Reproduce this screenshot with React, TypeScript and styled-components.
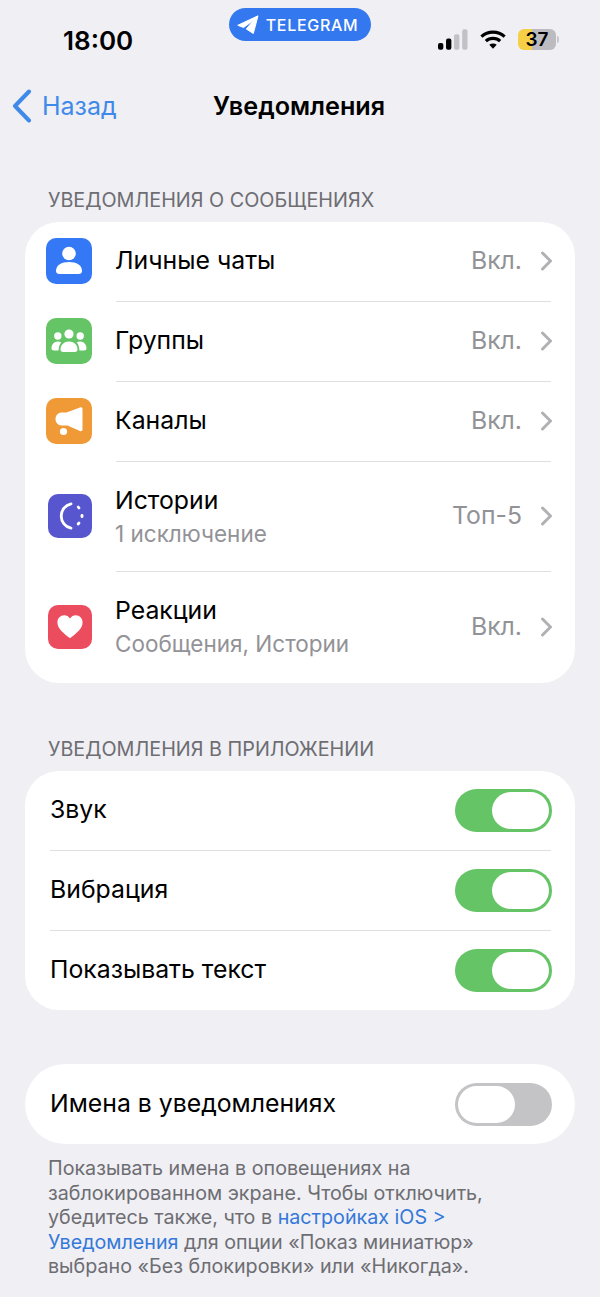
import React from "react";
import styled, { createGlobalStyle } from "styled-components";

const GlobalStyle = createGlobalStyle`
  html, body {
    margin: 0;
    padding: 0;
    background: #efeff4;
  }
  * {
    box-sizing: border-box;
  }
`;

const Page = styled.div`
  width: 600px;
  height: 1297px;
  overflow: hidden;
  background: #efeff4;
  font-family: Inter, "Liberation Sans", sans-serif;
  color: #000;
`;

const StatusBar = styled.div`
  height: 82px;
  display: grid;
  grid-template-columns: 1fr 142px 1fr;
`;

const Time = styled.div`
  padding: 25px 0 0 63px;
  font-size: 26px;
  line-height: 32px;
  font-weight: 600;
`;

const Pill = styled.div`
  margin-top: 8px;
  height: 33px;
  padding-right: 5px;
  border-radius: 17px;
  background: #3478f0;
  color: #fff;
  display: flex;
  align-items: center;
  justify-content: center;
  gap: 7px;
  font-size: 16px;
  font-weight: 500;
  letter-spacing: 0.7px;
`;

const StatusIcons = styled.div`
  display: flex;
  align-items: flex-start;
  justify-content: flex-end;
  padding: 29px 44px 0 0;
  gap: 12px;
`;

const Battery = styled.div`
  position: relative;
  width: 38px;
  height: 21px;
  border-radius: 6px;
  background: linear-gradient(to right, #f5cf45 0 38%, #bcbcc0 38% 100%);
  font-size: 19px;
  line-height: 21px;
  font-weight: 600;
  text-align: center;

  &::after {
    content: "";
    position: absolute;
    right: -3px;
    top: 7px;
    width: 2px;
    height: 7px;
    border-radius: 0 2px 2px 0;
    background: #c8c8cc;
  }
`;

const Nav = styled.div`
  height: 48px;
  display: grid;
  grid-template-columns: 1fr auto 1fr;
  align-items: center;
`;

const BackLink = styled.div`
  display: flex;
  align-items: center;
  gap: 10px;
  padding-left: 12px;
  color: #3f8ae8;
  font-size: 25px;
`;

const NavTitle = styled.div`
  padding-right: 2px;
  font-size: 25.2px;
  font-weight: 600;
`;

const SectionLabel = styled.div<{ $top: number }>`
  margin-top: ${(p) => p.$top}px;
  padding-left: 48px;
  height: 24px;
  font-size: 19.8px;
  line-height: 24px;
  color: #6d6d72;
`;

const Card = styled.div<{ $radius?: number; $top?: number }>`
  margin: ${(p) => p.$top ?? 0}px 25px 0;
  background: #fff;
  border-radius: ${(p) => p.$radius ?? 34}px;
  overflow: hidden;
`;

const Track = styled.div<{ $on: boolean }>`
  width: 97px;
  height: 43px;
  margin-bottom: 2px;
  border-radius: 22px;
  padding: 3px;
  background: ${(p) => (p.$on ? "#65c466" : "#c4c4c6")};
  display: flex;
  justify-content: ${(p) => (p.$on ? "flex-end" : "flex-start")};
`;

const RowText = styled.div<{ $two?: boolean }>`
  flex: 1;
  min-width: 0;
  padding-bottom: ${(p) => (p.$two ? 3 : 5)}px;
`;

const Row = styled.div<{ $height?: number; $pad: number; $inset: number }>`
  position: relative;
  height: ${(p) => p.$height ?? 80}px;
  padding: 0 23px 0 ${(p) => p.$pad}px;
  display: flex;
  align-items: center;

  &:not(:last-child)::after {
    content: "";
    position: absolute;
    left: ${(p) => p.$inset}px;
    right: 24px;
    bottom: 0;
    height: 1px;
    background: #dfdfe3;
  }

  &:last-child ${Track} {
    margin-bottom: 0;
  }

  &:last-child ${RowText} {
    padding-bottom: 3px;
  }
`;

const IconBox = styled.div<{ $bg: string; $size?: number }>`
  width: ${(p) => p.$size ?? 46}px;
  height: ${(p) => p.$size ?? 46}px;
  margin: 0 23px 2px ${(p) => (p.$size ? 46 - p.$size : 0)}px;
  flex: none;
  border-radius: 10px;
  background: ${(p) => p.$bg};
  display: flex;
  align-items: center;
  justify-content: center;
`;

const RowTitle = styled.div`
  font-size: 24.8px;
  line-height: 34px;
`;

const RowSub = styled.div`
  margin-top: 2px;
  font-size: 22.5px;
  line-height: 30px;
  color: #929297;
`;

const RowValue = styled.div`
  font-size: 24.8px;
  color: #929297;
  margin: 0 18px 4px 0;
`;

const ChevronWrap = styled.div`
  display: flex;
  margin: 0 -1px 2px 0;
`;

const Knob = styled.div`
  width: 57px;
  height: 37px;
  border-radius: 19px;
  background: #fff;
`;

const Footer = styled.div`
  margin-top: 12px;
  padding: 0 100px 0 48px;
  font-size: 19.7px;
  line-height: 24.5px;
  color: #6d6d72;
`;

const FooterLink = styled.span`
  color: #3478d9;
`;

const Chevron = () => (
  <ChevronWrap>
    <svg width="13" height="20" viewBox="0 0 13 20" fill="none">
      <path d="M2.5 2l8 8-8 8" stroke="#b0b0b5" strokeWidth="3" strokeLinecap="round" strokeLinejoin="round" />
    </svg>
  </ChevronWrap>
);

const PersonIcon = () => (
  <svg width="30" height="34" viewBox="0 0 30 34" fill="#fff">
    <circle cx="15" cy="9.5" r="6.8" />
    <path d="M2 27c0-6 5.6-9 13-9s13 3 13 9c0 2-1.4 3-3.4 3H5.400C3.400 30 2 29 2 27z" />
  </svg>
);

const GroupIcon = () => (
  <svg width="36" height="26" viewBox="0 0 36 26" fill="#fff">
    <circle cx="18" cy="6" r="4.6" />
    <circle cx="6.800" cy="8" r="3.700" />
    <circle cx="29.200" cy="8" r="3.700" />
    <path d="M9.500 21.500c0-5 3.800-8 8.500-8s8.500 3 8.500 8c0 1.500-1 2.500-2.500 2.500H12c-1.500 0-2.500-1-2.500-2.500z" />
    <path d="M7.600 22.500H3c-1.500 0-2.500-.8-2.500-2.200 0-4 2.800-6.800 6.300-6.800 1.300 0 2.500.4 3.500 1-1.800 2-2.700 4.500-2.700 8z" />
    <path d="M28.400 22.500H33c1.500 0 2.500-.8 2.500-2.200 0-4-2.800-6.800-6.300-6.800-1.300 0-2.500.4-3.500 1 1.800 2 2.700 4.500 2.700 8z" />
  </svg>
);

const MegaphoneIcon = () => (
  <svg width="28" height="31" viewBox="0 0 28 31" fill="#fff">
    <path d="M25 1.500c1-.5 2.500 0 2.500 1.500v20.500c0 1.500-1.500 2-2.500 1.500L12.500 19.500H6.500C3 19.500.5 16.500.5 13S3 6.500 6.500 6.500h5z" />
    <circle cx="8.500" cy="25.500" r="3.600" />
  </svg>
);

const StoryIcon = () => (
  <svg width="30" height="30" viewBox="0 0 30 30" fill="none" stroke="#fff" strokeLinecap="round" strokeWidth="2.800">
    <path d="M16 2.800A12.500 12.500 0 0 0 16 27.200" />
    <path d="M23.200 6l.8 1" />
    <path d="M27 14.300v1.400" />
    <path d="M24 22l-.9 1" />
  </svg>
);

const HeartIcon = () => (
  <svg width="28" height="26" viewBox="0 0 32 30" fill="#fff">
    <path d="M16 28C9 22.500 1.500 17 1.500 9.800 1.500 5 5 1.500 9.300 1.500c2.800 0 5.200 1.400 6.700 3.800 1.500-2.400 3.900-3.800 6.700-3.800 4.300 0 7.800 3.500 7.800 8.300C30.500 17 23 22.500 16 28z" />
  </svg>
);

const TelegramIcon = () => (
  <svg width="22" height="19" viewBox="0 0 22 19" fill="#fff">
    <path d="M21 .8L.8 10.300l5.800 2.200L17 4.800 9.300 14l7 4.500z" strokeLinejoin="round" stroke="#fff" strokeWidth="1" />
  </svg>
);

const SignalIcon = () => (
  <svg width="30" height="21" viewBox="0 0 31 21">
    <rect x="0" y="14" width="5.500" height="7" rx="2" fill="#000" />
    <rect x="8.300" y="9.500" width="5.500" height="11.500" rx="2" fill="#000" />
    <rect x="16.600" y="5" width="5.500" height="16" rx="2" fill="#c2c2c6" />
    <rect x="25" y="0" width="5.500" height="21" rx="2" fill="#c2c2c6" />
  </svg>
);

const WifiIcon = () => (
  <svg width="26" height="21" viewBox="0 0 28 21" fill="none" stroke="#000" strokeWidth="3.400">
    <path d="M1.500 7.500C8.500 1 19.500 1 26.500 7.500" />
    <path d="M6.300 12.300c4.200-4 11.200-4 15.400 0" />
    <path d="M14 20.500l-4-4.300c2.200-1.800 5.800-1.800 8 0z" fill="#000" stroke="none" />
  </svg>
);

const BackChevron = () => (
  <svg width="20" height="34" viewBox="0 0 20 34" fill="none">
    <path d="M17 2.500L3 17l14 14.500" stroke="#3f8ae8" strokeWidth="4" strokeLinecap="round" strokeLinejoin="round" />
  </svg>
);

const Toggle = ({ on }: { on: boolean }) => (
  <Track $on={on}>
    <Knob />
  </Track>
);

export default function App() {
  return (
    <Page>
      <GlobalStyle />
      <StatusBar>
        <Time>18:00</Time>
        <Pill>
          <TelegramIcon />
          TELEGRAM
        </Pill>
        <StatusIcons>
          <SignalIcon />
          <WifiIcon />
          <Battery>37</Battery>
        </StatusIcons>
      </StatusBar>

      <Nav>
        <BackLink>
          <BackChevron />
          Назад
        </BackLink>
        <NavTitle>Уведомления</NavTitle>
      </Nav>

      <SectionLabel $top={58}>УВЕДОМЛЕНИЯ О СООБЩЕНИЯХ</SectionLabel>
      <Card $top={10}>
        <Row $pad={21} $inset={91}>
          <IconBox $bg="#3478f6"><PersonIcon /></IconBox>
          <RowText><RowTitle>Личные чаты</RowTitle></RowText>
          <RowValue>Вкл.</RowValue>
          <Chevron />
        </Row>
        <Row $pad={21} $inset={91}>
          <IconBox $bg="#65c466"><GroupIcon /></IconBox>
          <RowText><RowTitle>Группы</RowTitle></RowText>
          <RowValue>Вкл.</RowValue>
          <Chevron />
        </Row>
        <Row $pad={21} $inset={91}>
          <IconBox $bg="#f09a37"><MegaphoneIcon /></IconBox>
          <RowText><RowTitle>Каналы</RowTitle></RowText>
          <RowValue>Вкл.</RowValue>
          <Chevron />
        </Row>
        <Row $pad={21} $inset={91} $height={110}>
          <IconBox $bg="#5756ce" $size={44}><StoryIcon /></IconBox>
          <RowText $two>
            <RowTitle>Истории</RowTitle>
            <RowSub>1 исключение</RowSub>
          </RowText>
          <RowValue>Топ-5</RowValue>
          <Chevron />
        </Row>
        <Row $pad={21} $inset={91} $height={111}>
          <IconBox $bg="#eb4d5f" $size={44}><HeartIcon /></IconBox>
          <RowText $two>
            <RowTitle>Реакции</RowTitle>
            <RowSub>Сообщения, Истории</RowSub>
          </RowText>
          <RowValue>Вкл.</RowValue>
          <Chevron />
        </Row>
      </Card>

      <SectionLabel $top={54}>УВЕДОМЛЕНИЯ В ПРИЛОЖЕНИИ</SectionLabel>
      <Card $top={10}>
        <Row $pad={25} $inset={25}>
          <RowText><RowTitle>Звук</RowTitle></RowText>
          <Toggle on />
        </Row>
        <Row $pad={25} $inset={25}>
          <RowText><RowTitle>Вибрация</RowTitle></RowText>
          <Toggle on />
        </Row>
        <Row $pad={25} $inset={25} $height={79}>
          <RowText><RowTitle>Показывать текст</RowTitle></RowText>
          <Toggle on />
        </Row>
      </Card>

      <Card $top={54} $radius={40}>
        <Row $pad={25} $inset={25}>
          <RowText><RowTitle>Имена в уведомлениях</RowTitle></RowText>
          <Toggle on={false} />
        </Row>
      </Card>

      <Footer>
        Показывать имена в оповещениях на заблокированном экране. Чтобы отключить, убедитесь также, что в{" "}
        <FooterLink>настройках iOS &gt;</FooterLink> <FooterLink>Уведомления</FooterLink> для опции «Показ миниатюр» выбрано «Без блокировки» или «Никогда».
      </Footer>
    </Page>
  );
}
